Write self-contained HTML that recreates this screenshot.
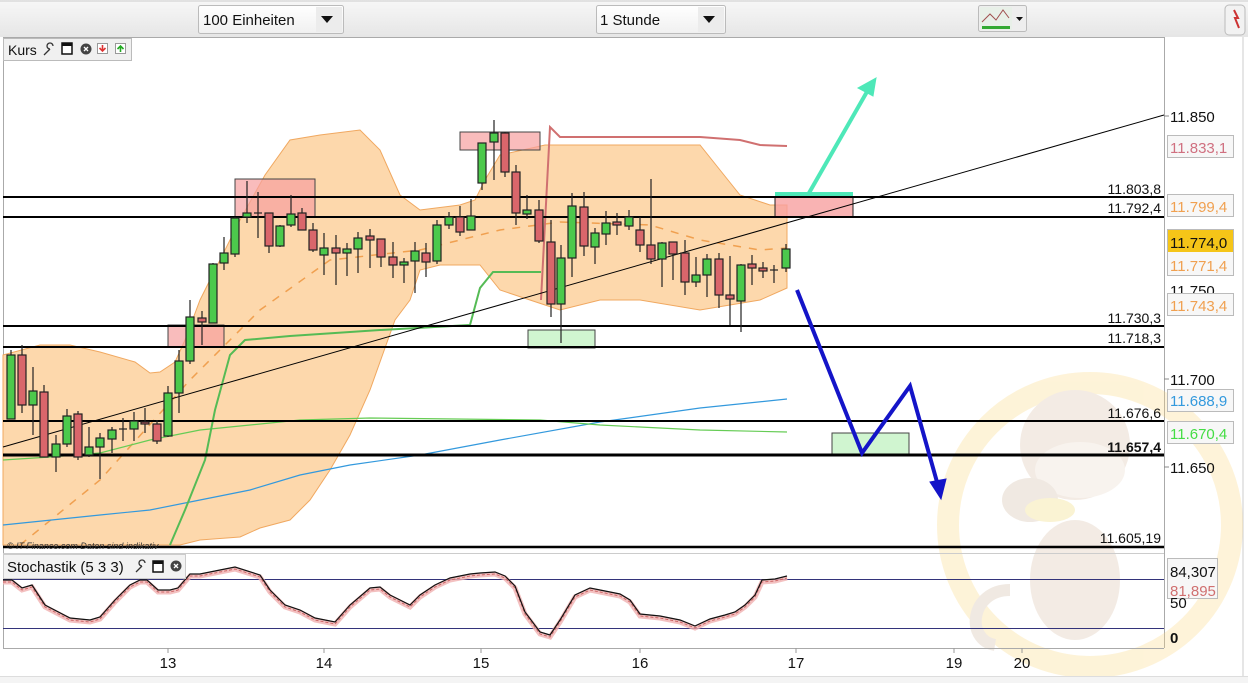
<!DOCTYPE html>
<html><head><meta charset="utf-8"><style>
body{margin:0;width:1248px;height:683px;overflow:hidden;background:#fff;font-family:"Liberation Sans",sans-serif;}
</style></head><body>
<svg width="1248" height="683" xmlns="http://www.w3.org/2000/svg" font-family="Liberation Sans, sans-serif">
<defs><linearGradient id="hd" x1="0" y1="0" x2="0" y2="1"><stop offset="0" stop-color="#f7f7f7"/><stop offset="1" stop-color="#e6e6e6"/></linearGradient>
<linearGradient id="dd" x1="0" y1="0" x2="0" y2="1"><stop offset="0" stop-color="#fff"/><stop offset="1" stop-color="#f0f0f0"/></linearGradient></defs>
<rect x="0" y="0" width="1248" height="37" fill="url(#hd)"/>
<line x1="0" y1="1" x2="1248" y2="1" stroke="#ccc"/>
<rect x="198.5" y="5.5" width="145" height="28" rx="2" fill="url(#dd)" stroke="#bbb"/>
<text x="203" y="25" font-size="15" fill="#111">100 Einheiten</text>
<rect x="316" y="7" width="26" height="25" fill="#ececec"/><path d="M321 16h12l-6 7z" fill="#111"/>
<rect x="596.5" y="5.5" width="129" height="28" rx="2" fill="url(#dd)" stroke="#bbb"/>
<text x="600" y="25" font-size="15" fill="#111">1 Stunde</text>
<rect x="698" y="7" width="26" height="25" fill="#ececec"/><path d="M703 16h12l-6 7z" fill="#111"/>
<rect x="978.5" y="5.5" width="48" height="26" rx="2" fill="#eee" stroke="#bbb"/>
<rect x="980" y="7" width="32" height="23" fill="#e8f0e8"/>
<path d="M982 22l8-8 6 6 7-10 6 8" stroke="#a05050" fill="none"/><rect x="982" y="26" width="28" height="3" fill="#3a3"/>
<path d="M1016 17h7l-3.5 4z" fill="#111"/>
<rect x="1225" y="5" width="20" height="30" rx="4" fill="#f2f2f2" stroke="#bbb"/><path d="M1234 10l4 8h-3l4 10" stroke="#c33" fill="none" stroke-width="2"/>
<line x1="1243" y1="37" x2="1243" y2="683" stroke="#ccc"/>

<line x1="3.5" y1="37" x2="3.5" y2="648" stroke="#aaa"/>
<line x1="1164.5" y1="37" x2="1164.5" y2="648" stroke="#aaa"/>
<line x1="3" y1="37.5" x2="1164" y2="37.5" stroke="#aaa"/>

<g opacity="0.3">
<circle cx="1090" cy="525" r="142" fill="none" stroke="#fbd880" stroke-width="22"/>
<ellipse cx="1075" cy="445" rx="55" ry="55" fill="#d8c0a8"/>
<ellipse cx="1080" cy="470" rx="45" ry="28" fill="#ead8c8"/>
<ellipse cx="1075" cy="580" rx="45" ry="60" fill="#d8c0a8"/>
<ellipse cx="1030" cy="500" rx="28" ry="22" fill="#d0b8a0"/>
<ellipse cx="1050" cy="510" rx="25" ry="12" fill="#f0d870"/>
<path d="M1010 590c-40 0-45 50-15 55" stroke="#d0b8a0" stroke-width="12" fill="none"/>
</g>

<path d="M3 355L40 345 70 345 100 352 135 362 150 373 160 372 175 362 185 340 200 300 220 260 240 220 265 175 290 140 320 135 360 130 380 150 400 195 420 210 460 205 475 200 485 180 500 155 545 145 700 145 720 170 740 195 770 205 787 205 787 288 760 300 700 310 640 300 600 300 560 310 545 305 500 290 480 265 440 265 420 270 410 300 395 320 370 390 350 435 330 470 310 500 290 520 260 528 240 537 200 540 180 545 3 545Z" fill="#fdd8ac" stroke="#f0a860" stroke-width="1"/>
<path d="M20 545L100 480 190 380 260 310 330 260 420 250 500 230 560 222 650 225 700 240 760 250 787 248" fill="none" stroke="#f0a050" stroke-width="1.5" stroke-dasharray="8,8"/>

<rect x="235" y="179" width="80" height="38" fill="#f7a0a0" fill-opacity="0.7" stroke="#444"/>
<rect x="168" y="325" width="56" height="22" fill="#f7a0a0" fill-opacity="0.7" stroke="#444"/>
<rect x="460" y="132" width="80" height="18" fill="#f7a0a0" fill-opacity="0.7" stroke="#444"/>
<rect x="775" y="197" width="78" height="20" fill="#f7a0a0" fill-opacity="0.8" stroke="#222"/>
<rect x="528" y="330" width="67" height="18" fill="#d0f5d0" stroke="#444"/>
<rect x="832" y="433" width="77" height="21" fill="#d0f5d0" stroke="#444"/>

<path d="M3 525L100 515 150 510 200 500 250 490 300 475 350 465 420 455 500 440 600 422 700 408 787 399" fill="none" stroke="#3399dd" stroke-width="1.2"/>
<path d="M3 460L50 457 100 453 150 440 200 430 250 425 300 420 370 418 540 420 600 425 700 430 787 432" fill="none" stroke="#66cc55" stroke-width="1.2"/>
<path d="M170 545L185 510 205 460 215 410 230 355 245 340 290 336 380 330 470 325 480 288 493 272 541 272" fill="none" stroke="#55bb55" stroke-width="2"/>
<path d="M541 300L550 127 560 137 700 137 740 140 760 145 787 146" fill="none" stroke="#d07070" stroke-width="2"/>
<g stroke="#000">
<line x1="3" y1="197" x2="1164" y2="197" stroke-width="2"/>
<line x1="3" y1="217" x2="1164" y2="217" stroke-width="2"/>
<line x1="3" y1="326" x2="1164" y2="326" stroke-width="2"/>
<line x1="3" y1="347" x2="1164" y2="347" stroke-width="2"/>
<line x1="3" y1="421" x2="1164" y2="421" stroke-width="2"/>
<line x1="3" y1="455" x2="1164" y2="455" stroke-width="3"/>
<line x1="3" y1="547" x2="1164" y2="547" stroke-width="2.5"/>
<line x1="3" y1="447" x2="1164" y2="115" stroke-width="1"/>
</g>

<g stroke="#222" stroke-width="1.2">
<g fill="#4cc94c">
<line x1="11" y1="350" x2="11" y2="419"/><rect x="7" y="355" width="8" height="64"/>
<line x1="33" y1="367" x2="33" y2="435"/><rect x="29" y="391" width="8" height="14"/>
<line x1="56" y1="435" x2="56" y2="472"/><rect x="52" y="444" width="8" height="13"/>
<line x1="67" y1="409" x2="67" y2="447"/><rect x="63" y="416" width="8" height="28"/>
<line x1="89" y1="427" x2="89" y2="457"/><rect x="85" y="447" width="8" height="8"/>
<line x1="100" y1="433" x2="100" y2="479"/><rect x="96" y="438" width="8" height="9"/>
<line x1="112" y1="427" x2="112" y2="453"/><rect x="108" y="430" width="8" height="9"/>
<line x1="123" y1="418" x2="123" y2="441"/><line x1="119" y1="429" x2="127" y2="429"/>
<line x1="134" y1="412" x2="134" y2="441"/><rect x="130" y="421" width="8" height="8"/>
<line x1="168" y1="386" x2="168" y2="437"/><rect x="164" y="393" width="8" height="43"/>
<line x1="179" y1="350" x2="179" y2="413"/><rect x="175" y="361" width="8" height="32"/>
<line x1="190" y1="300" x2="190" y2="364"/><rect x="186" y="317" width="8" height="44"/>
<line x1="213" y1="263" x2="213" y2="323"/><rect x="209" y="264" width="8" height="59"/>
<line x1="224" y1="237" x2="224" y2="270"/><rect x="220" y="253" width="8" height="10"/>
<line x1="235" y1="217" x2="235" y2="257"/><rect x="231" y="218" width="8" height="36"/>
<line x1="247" y1="181" x2="247" y2="223"/><rect x="243" y="213" width="8" height="4"/>
<line x1="258" y1="192" x2="258" y2="238"/><line x1="254" y1="213" x2="262" y2="213"/>
<line x1="280" y1="225" x2="280" y2="247"/><rect x="276" y="226" width="8" height="20"/>
<line x1="291" y1="195" x2="291" y2="227"/><rect x="287" y="214" width="8" height="11"/>
<line x1="324" y1="233" x2="324" y2="275"/><rect x="320" y="248" width="8" height="7"/>
<line x1="347" y1="243" x2="347" y2="276"/><rect x="343" y="249" width="8" height="4"/>
<line x1="358" y1="232" x2="358" y2="273"/><rect x="354" y="238" width="8" height="11"/>
<line x1="404" y1="258" x2="404" y2="283"/><rect x="400" y="262" width="8" height="3"/>
<line x1="415" y1="242" x2="415" y2="293"/><rect x="411" y="251" width="8" height="10"/>
<line x1="437" y1="220" x2="437" y2="264"/><rect x="433" y="225" width="8" height="36"/>
<line x1="449" y1="212" x2="449" y2="229"/><rect x="445" y="217" width="8" height="8"/>
<line x1="471" y1="199" x2="471" y2="230"/><rect x="467" y="216" width="8" height="14"/>
<line x1="482" y1="143" x2="482" y2="190"/><rect x="478" y="143" width="8" height="40"/>
<line x1="494" y1="120" x2="494" y2="180"/><rect x="490" y="133" width="8" height="9"/>
<line x1="527" y1="195" x2="527" y2="219"/><rect x="523" y="210" width="8" height="4"/>
<line x1="561" y1="245" x2="561" y2="343"/><rect x="557" y="258" width="8" height="46"/>
<line x1="572" y1="193" x2="572" y2="277"/><rect x="568" y="206" width="8" height="52"/>
<line x1="595" y1="228" x2="595" y2="264"/><rect x="591" y="233" width="8" height="14"/>
<line x1="606" y1="211" x2="606" y2="245"/><rect x="602" y="223" width="8" height="11"/>
<line x1="629" y1="210" x2="629" y2="230"/><rect x="625" y="217" width="8" height="9"/>
<line x1="662" y1="242" x2="662" y2="287"/><rect x="658" y="243" width="8" height="16"/>
<line x1="696" y1="257" x2="696" y2="287"/><rect x="692" y="275" width="8" height="7"/>
<line x1="707" y1="254" x2="707" y2="297"/><rect x="703" y="259" width="8" height="16"/>
<line x1="741" y1="264" x2="741" y2="332"/><rect x="737" y="265" width="8" height="36"/>
<line x1="774" y1="265" x2="774" y2="283"/><line x1="770" y1="270" x2="778" y2="270"/>
<line x1="786" y1="244" x2="786" y2="272"/><rect x="782" y="249" width="8" height="19"/>
</g>
<g fill="#d9666b">
<line x1="22" y1="345" x2="22" y2="413"/><rect x="18" y="355" width="8" height="50"/>
<line x1="44" y1="385" x2="44" y2="457"/><rect x="40" y="392" width="8" height="65"/>
<line x1="78" y1="411" x2="78" y2="460"/><rect x="74" y="414" width="8" height="43"/>
<line x1="145" y1="408" x2="145" y2="433"/><rect x="141" y="422" width="8" height="2"/>
<line x1="157" y1="420" x2="157" y2="444"/><rect x="153" y="424" width="8" height="17"/>
<line x1="202" y1="311" x2="202" y2="345"/><rect x="198" y="318" width="8" height="4"/>
<line x1="269" y1="213" x2="269" y2="253"/><rect x="265" y="213" width="8" height="33"/>
<line x1="302" y1="208" x2="302" y2="230"/><rect x="298" y="213" width="8" height="17"/>
<line x1="313" y1="223" x2="313" y2="252"/><rect x="309" y="230" width="8" height="20"/>
<line x1="336" y1="235" x2="336" y2="285"/><rect x="332" y="248" width="8" height="5"/>
<line x1="370" y1="229" x2="370" y2="268"/><rect x="366" y="236" width="8" height="4"/>
<line x1="381" y1="239" x2="381" y2="267"/><rect x="377" y="239" width="8" height="18"/>
<line x1="393" y1="242" x2="393" y2="278"/><rect x="389" y="257" width="8" height="8"/>
<line x1="426" y1="243" x2="426" y2="277"/><rect x="422" y="253" width="8" height="9"/>
<line x1="460" y1="206" x2="460" y2="236"/><rect x="456" y="217" width="8" height="15"/>
<line x1="505" y1="132" x2="505" y2="177"/><rect x="501" y="133" width="8" height="39"/>
<line x1="516" y1="165" x2="516" y2="225"/><rect x="512" y="172" width="8" height="41"/>
<line x1="539" y1="200" x2="539" y2="243"/><rect x="535" y="210" width="8" height="31"/>
<line x1="551" y1="220" x2="551" y2="317"/><rect x="547" y="242" width="8" height="62"/>
<line x1="584" y1="192" x2="584" y2="256"/><rect x="580" y="207" width="8" height="39"/>
<line x1="617" y1="213" x2="617" y2="235"/><rect x="613" y="222" width="8" height="3"/>
<line x1="640" y1="217" x2="640" y2="252"/><rect x="636" y="230" width="8" height="15"/>
<line x1="651" y1="179" x2="651" y2="264"/><rect x="647" y="245" width="8" height="14"/>
<line x1="673" y1="242" x2="673" y2="280"/><rect x="669" y="242" width="8" height="12"/>
<line x1="685" y1="240" x2="685" y2="295"/><rect x="681" y="253" width="8" height="29"/>
<line x1="719" y1="253" x2="719" y2="308"/><rect x="715" y="259" width="8" height="36"/>
<line x1="730" y1="256" x2="730" y2="325"/><rect x="726" y="295" width="8" height="4"/>
<line x1="752" y1="255" x2="752" y2="285"/><rect x="748" y="264" width="8" height="4"/>
<line x1="763" y1="262" x2="763" y2="278"/><rect x="759" y="268" width="8" height="3"/>
</g>
</g>

<g stroke="#4ee8b8" stroke-width="4" fill="#4ee8b8">
<line x1="775" y1="194" x2="853" y2="194"/>
<line x1="809" y1="193" x2="868" y2="90"/>
<path d="M876 78L858 88 873 96Z" stroke-width="1"/>
</g>
<g stroke="#1414c8" stroke-width="4" fill="#1414c8">
<polyline points="797,290 862,453 910,386 937,482" fill="none"/>
<path d="M941 499L930 482 946 479Z" stroke-width="1"/>
</g>

<g font-size="14" fill="#111" text-anchor="end">
<text x="1161" y="194">11.803,8</text>
<text x="1161" y="213">11.792,4</text>
<text x="1161" y="323">11.730,3</text>
<text x="1161" y="343">11.718,3</text>
<text x="1161" y="418">11.676,6</text>
<text x="1161" y="452" font-weight="bold">11.657,4</text>
<text x="1161" y="543">11.605,19</text>
</g>
<text x="7" y="549" font-size="9" font-style="italic" fill="#333">© IT-Finance.com  Daten sind indikativ</text>

<g font-size="15">
<text x="1170" y="122" fill="#111">11.850</text>
<rect x="1167.5" y="135.5" width="66" height="22" fill="#f7f7f7" stroke="#bbb"/><text x="1170" y="153" fill="#d07080">11.833,1</text>
<rect x="1167.5" y="194.5" width="66" height="22" fill="#f7f7f7" stroke="#bbb"/><text x="1170" y="212" fill="#f0a050">11.799,4</text>
<rect x="1167.5" y="229.5" width="66" height="46" fill="#f7f7f7" stroke="#bbb"/>
<rect x="1168" y="230" width="65" height="22" fill="#f5c518"/><text x="1170" y="248" fill="#111">11.774,0</text>
<text x="1170" y="271" fill="#f0a050">11.771,4</text>
<text x="1170" y="296" fill="#111">11.750</text>
<rect x="1167.5" y="293.5" width="66" height="22" fill="#f7f7f7" stroke="#bbb"/><text x="1170" y="311" fill="#f0a050">11.743,4</text>
<text x="1170" y="385" fill="#111">11.700</text>
<rect x="1167.5" y="389.5" width="66" height="22" fill="#f7f7f7" stroke="#bbb"/><text x="1170" y="406" fill="#3399dd">11.688,9</text>
<rect x="1167.5" y="421.5" width="66" height="22" fill="#f7f7f7" stroke="#bbb"/><text x="1170" y="439" fill="#44dd44">11.670,4</text>
<text x="1170" y="473" fill="#111">11.650</text>
</g>
<g stroke="#888"><line x1="1164" y1="116" x2="1169" y2="116"/><line x1="1164" y1="379" x2="1169" y2="379"/><line x1="1164" y1="467" x2="1169" y2="467"/></g>

<rect x="3.5" y="38.5" width="128" height="22" fill="#f0f0f0" stroke="#bbb"/>
<text x="8" y="55" font-size="14" fill="#111">Kurs</text>
<path d="M44 55l6-6m0 0a3 3 0 1 1 3 -3" stroke="#333" fill="none" stroke-width="1.3"/>
<rect x="62" y="43" width="10" height="11" fill="#fff" stroke="#111" stroke-width="1.5"/><rect x="62" y="43" width="10" height="3" fill="#111"/>
<circle cx="86" cy="49" r="5.5" fill="#444"/><path d="M84 47l4 4m0-4l-4 4" stroke="#fff" stroke-width="1.3"/>
<rect x="97.5" y="43.5" width="10" height="10" fill="#fff" stroke="#999"/><path d="M102.5 45v6m-3-3l3 3 3-3" stroke="#d33" stroke-width="1.6" fill="none"/>
<rect x="115.5" y="43.5" width="10" height="10" fill="#fff" stroke="#999"/><path d="M120.5 52v-6m-3 3l3-3 3 3" stroke="#2a2" stroke-width="1.6" fill="none"/>

<line x1="3" y1="553.5" x2="1164" y2="553.5" stroke="#ccc"/>
<line x1="3" y1="579.5" x2="1164" y2="579.5" stroke="#33337a"/>
<line x1="3" y1="628.5" x2="1164" y2="628.5" stroke="#33337a"/>
<path d="M3 582L12 582 22 590 32 587 45 607 70 620 90 622 100 619 115 602 130 587 140 582 147 582 158 592 170 592 178 590 190 576 200 576 215 573 235 569 260 577 270 592 285 607 300 612 315 620 335 624 350 607 370 590 380 589 390 597 400 602 410 607 420 597 435 587 450 580 460 578 470 576 480 575 495 574 505 578 515 588 525 614 540 634 550 637 560 622 575 597 590 590 600 592 620 596 630 602 640 616 660 618 680 622 695 628 710 621 725 617 735 614 745 607 755 597 762 582 775 581 787 578" fill="none" stroke="#f0b0b0" stroke-width="5" stroke-opacity="0.8"/>
<path d="M3 582L12 582 22 590 32 587 45 607 70 620 90 622 100 619 115 602 130 587 140 582 147 582 158 592 170 592 178 590 190 576 200 576 215 573 235 569 260 577 270 592 285 607 300 612 315 620 335 624 350 607 370 590 380 589 390 597 400 602 410 607 420 597 435 587 450 580 460 578 470 576 480 575 495 574 505 578 515 588 525 614 540 634 550 637 560 622 575 597 590 590 600 592 620 596 630 602 640 616 660 618 680 622 695 628 710 621 725 617 735 614 745 607 755 597 762 582 775 581 787 578" fill="none" stroke="#cc6666" stroke-width="1" stroke-dasharray="3,2"/>
<path d="M3 580L12 580 22 588 32 585 45 605 70 618 90 620 100 617 115 600 130 585 140 580 147 580 158 590 170 590 178 588 190 574 200 574 215 571 235 567 260 575 270 590 285 605 300 610 315 618 335 622 350 605 370 588 380 587 390 595 400 600 410 605 420 595 435 585 450 578 460 576 470 574 480 573 495 572 505 576 515 586 525 612 540 632 550 635 560 620 575 595 590 588 600 590 620 594 630 600 640 614 660 616 680 620 695 626 710 619 725 615 735 612 745 605 755 595 762 580 775 579 787 576" fill="none" stroke="#111" stroke-width="1.2"/>
<rect x="3.5" y="554.5" width="182" height="24" fill="#f0f0f0" fill-opacity="0.85" stroke="#ccc"/>
<text x="7" y="572" font-size="15" fill="#111">Stochastik (5 3 3)</text>
<path d="M136 572l6-6m0 0a3 3 0 1 1 3 -3" stroke="#333" fill="none" stroke-width="1.3"/>
<rect x="153" y="561" width="10" height="11" fill="#fff" stroke="#111" stroke-width="1.5"/><rect x="153" y="561" width="10" height="3" fill="#111"/>
<circle cx="176" cy="566" r="5.5" fill="#444"/><path d="M174 564l4 4m0-4l-4 4" stroke="#fff" stroke-width="1.3"/>
<g font-size="15">
<rect x="1167.5" y="558.5" width="50" height="40" fill="#f7f7f7" stroke="#bbb"/>
<text x="1170" y="577" fill="#111">84,307</text>
<text x="1170" y="596" fill="#d07070">81,895</text>
<text x="1170" y="608" fill="#111">50</text>
<text x="1170" y="643" fill="#111" font-weight="bold">0</text>
</g>

<line x1="3" y1="648.5" x2="1164" y2="648.5" stroke="#aaa"/>
<g stroke="#999"><line x1="168" y1="648" x2="168" y2="653"/><line x1="324" y1="648" x2="324" y2="653"/><line x1="481" y1="648" x2="481" y2="653"/><line x1="640" y1="648" x2="640" y2="653"/><line x1="796" y1="648" x2="796" y2="653"/><line x1="954" y1="648" x2="954" y2="653"/><line x1="1022" y1="648" x2="1022" y2="653"/></g>
<g font-size="15" fill="#111" text-anchor="middle">
<text x="168" y="668">13</text><text x="324" y="668">14</text><text x="481" y="668">15</text><text x="640" y="668">16</text><text x="796" y="668">17</text><text x="954" y="668">19</text><text x="1022" y="668">20</text>
</g>
<line x1="0" y1="676.5" x2="1248" y2="676.5" stroke="#ddd"/>
<rect x="0" y="677" width="1248" height="6" fill="#f4f4f4"/>
</svg>
</body></html>
